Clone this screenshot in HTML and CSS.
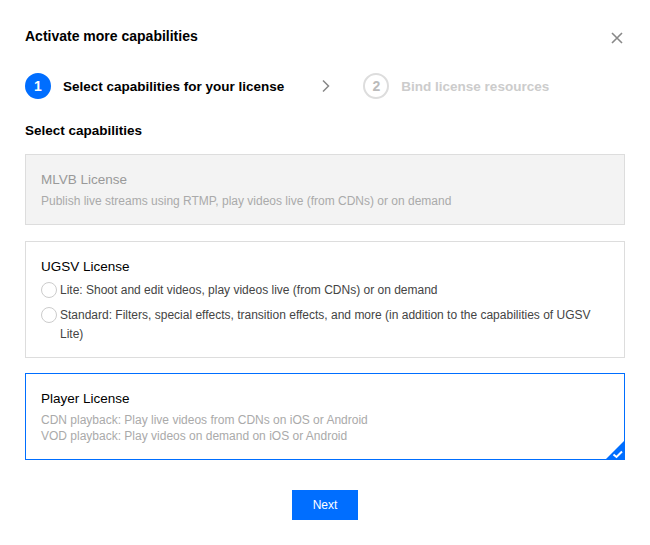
FILE: index.html
```html
<!DOCTYPE html>
<html>
<head>
<meta charset="utf-8">
<link rel="stylesheet" href="styles.css">
</head>
<body>
<div class="dialog">
  <div class="header">
    <div class="title">Activate more capabilities</div>
    <svg class="close" width="14" height="14" viewBox="0 0 14 14"><path d="M2 2L12 12M12 2L2 12" stroke="#888" stroke-width="1.6" fill="none"/></svg>
  </div>
  <div class="steps">
    <div class="step active"><span class="num">1</span><span class="label">Select capabilities for your license</span></div>
    <svg class="chev" width="10" height="14" viewBox="0 0 10 14"><path d="M2 1.5L7.5 7L2 12.5" stroke="#888" stroke-width="1.5" fill="none"/></svg>
    <div class="step"><span class="num">2</span><span class="label">Bind license resources</span></div>
  </div>
  <div class="section">Select capabilities</div>
  <div class="card disabled">
    <div class="card-title">MLVB License</div>
    <div class="desc">Publish live streams using RTMP, play videos live (from CDNs) or on demand</div>
  </div>
  <div class="card ugsv">
    <div class="card-title">UGSV License</div>
    <div class="radio"><span class="dot"></span><span>Lite: Shoot and edit videos, play videos live (from CDNs) or on demand</span></div>
    <div class="radio"><span class="dot"></span><span>Standard: Filters, special effects, transition effects, and more (in addition to the capabilities of UGSV Lite)</span></div>
  </div>
  <div class="card selected">
    <div class="card-title">Player License</div>
    <div class="desc light">CDN playback: Play live videos from CDNs on iOS or Android</div>
    <div class="desc light">VOD playback: Play videos on demand on iOS or Android</div>
    <svg class="corner" width="20" height="20" viewBox="0 0 20 20"><path d="M20 0L20 20L0 20Z" fill="#006eff"/><path d="M8.5 14.5L11.5 17L17 11.5" stroke="#fff" stroke-width="2" fill="none"/></svg>
  </div>
  <div class="footer"><button class="btn">Next</button></div>
</div>
</body>
</html>
```
FILE: styles.css
```css
* { box-sizing: border-box; }
html, body { margin: 0; padding: 0; background: #fff; }
body { font-family: "Liberation Sans", Arial, sans-serif; color: #000; }
.dialog { width: 650px; height: 545px; padding: 27px 25px 0 25px; }
.header { display: flex; justify-content: space-between; align-items: center; height: 18px; }
.title { font-size: 14px; font-weight: bold; color: #000; }
.close { margin-right: 1px; margin-top: 4px; }
.steps { display: flex; align-items: center; margin-top: 27px; height: 28px; }
.step { display: flex; align-items: center; }
.num { width: 26px; height: 26px; border-radius: 50%; display: flex; align-items: center; justify-content: center; font-size: 14px; font-weight: bold; border: 2px solid #ddd; color: #bbb; }
.step.active .num { background: #006eff; border-color: #006eff; color: #fff; }
.label { margin-left: 12px; font-size: 13.5px; font-weight: bold; color: #ccc; }
.step.active .label { color: #000; }
.chev { margin-left: 37px; margin-right: 32px; }
.section { margin-top: 23px; font-size: 13.5px; font-weight: bold; height: 16px; }
.card { position: relative; border: 1px solid #ddd; padding: 16px 15px 16px 15px; margin-top: 16px; }
.card.disabled { background: #f3f3f3; margin-top: 15px; padding-bottom: 15px; }
.card.disabled .card-title { color: #999; }
.card.disabled .desc { color: #aaa; }
.card.ugsv { padding-bottom: 13px; }
.card.ugsv .card-title { margin-bottom: 5px; }
.card.selected { border-color: #006eff; padding-bottom: 15px; margin-top: 15px; }
.card-title { font-size: 13.5px; line-height: 18px; color: #000; margin-bottom: 4px; }
.desc { font-size: 12px; line-height: 16px; color: #888; }
.desc.light { color: #aaa; }
.radio { display: flex; align-items: flex-start; font-size: 12px; line-height: 19px; color: #444; margin-top: 2px; }
.radio + .radio { margin-top: 6px; }
.dot { flex: none; width: 16px; height: 16px; border: 1px solid #ccc; border-radius: 50%; margin-right: 3px; margin-top: 1px; }
.corner { position: absolute; right: -1px; bottom: -1px; }
.footer { display: flex; justify-content: center; margin-top: 30px; }
.btn { width: 66px; height: 30px; background: #006eff; border: none; color: #fff; font-family: "Liberation Sans", Arial, sans-serif; font-size: 12px; padding: 0; }
```
